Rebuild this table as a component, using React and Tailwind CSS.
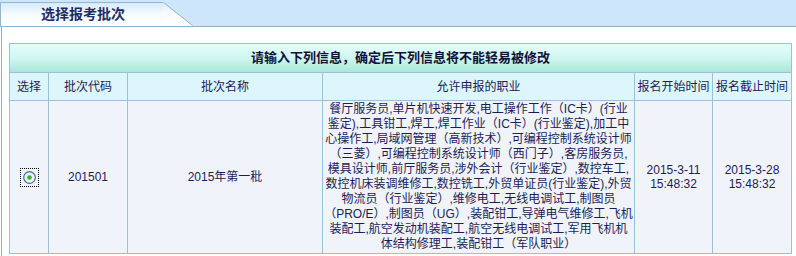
import React from "react";

const jobLines = [
  "餐厅服务员,单片机快速开发,电工操作工作（IC卡）(行业",
  "鉴定),工具钳工,焊工,焊工作业（IC卡）(行业鉴定),加工中",
  "心操作工,局域网管理（高新技术）,可编程控制系统设计师",
  "（三菱）,可编程控制系统设计师（西门子）,客房服务员,",
  "模具设计师,前厅服务员,涉外会计（行业鉴定）,数控车工,",
  "数控机床装调维修工,数控铣工,外贸单证员(行业鉴定),外贸",
  "物流员（行业鉴定）,维修电工,无线电调试工,制图员",
  "（PRO/E）,制图员（UG）,装配钳工,导弹电气维修工,飞机",
  "装配工,航空发动机装配工,航空无线电调试工,军用飞机机",
  "体结构修理工,装配钳工（军队职业）",
];

const headers = ["选择", "批次代码", "批次名称", "允许申报的职业", "报名开始时间", "报名截止时间"];

function Radio() {
  return (
    <span className="flex h-[19px] w-[19px] items-center justify-center border border-dotted border-black">
      <svg width="13" height="13" viewBox="0 0 13 13">
        <defs>
          <linearGradient id="rg" x1="0" y1="0" x2="1" y2="1">
            <stop offset="0" stopColor="#dfe7ef" />
            <stop offset="1" stopColor="#ffffff" />
          </linearGradient>
        </defs>
        <circle cx="6.5" cy="6.5" r="5.8" fill="url(#rg)" stroke="#3f6e9f" strokeWidth="1.2" />
        <circle cx="6.5" cy="6.5" r="2.3" fill="#2fb52f" />
      </svg>
    </span>
  );
}

export default function App() {
  return (
    <div className="h-[256px] w-[796px] overflow-hidden bg-white font-['Liberation_Sans','Noto_Sans_CJK_SC',sans-serif] text-[12px] text-[#1c1d58]">
      {/* top tab bar */}
      <div className="flex h-[27px] border-b border-[#8cb3cb] bg-[#cde6fb]">
        <div className="mt-[2px] flex h-[24px] w-[163px] items-center border-t border-l border-[#93b8d0] bg-gradient-to-b from-[#d6eafb] via-[#f7fbfe] to-white pl-[40px] text-[14px] font-bold text-[#1f2c6a]">
          选择报考批次
        </div>
        <svg width="30" height="24" className="mt-[2px]">
          <defs>
            <linearGradient id="tg" x1="0" y1="0" x2="0" y2="1">
              <stop offset="0" stopColor="#d6eafb" />
              <stop offset="0.45" stopColor="#f7fbfe" />
              <stop offset="1" stopColor="#ffffff" />
            </linearGradient>
          </defs>
          <polygon points="0,0 1,0 30,24 0,24" fill="url(#tg)" />
          <line x1="0.5" y1="0.5" x2="29.5" y2="23.5" stroke="#93b0c4" strokeWidth="1" />
        </svg>
      </div>

      {/* panel */}
      <div className="ml-px h-[229px] border-l border-[#8cb3cb] pt-[16px] pl-[7px]">
        <div className="grid w-[783px] grid-cols-[38px_78px_194px_311px_77px_78px] gap-px bg-[#9cc0dc] p-px">
          <div className="col-span-6 flex h-[28px] items-center justify-center bg-gradient-to-b from-[#e4fdfd] via-[#d0f6f0] to-[#a9e8d6] text-[13px] font-bold text-[#10123a]">
            请输入下列信息，确定后下列信息将不能轻易被修改
          </div>

          {headers.map((h) => (
            <div key={h} className="flex h-[27px] items-center justify-center bg-[#ddf6fc] whitespace-nowrap">
              {h}
            </div>
          ))}

          <div className="flex h-[152px] items-center justify-center bg-[#f0f4fa]">
            <Radio />
          </div>
          <div className="flex items-center justify-center bg-[#f0f4fa]">201501</div>
          <div className="flex items-center justify-center bg-[#f0f4fa]">2015年第一秕</div>
          <div className="flex flex-col items-center justify-center bg-[#f0f4fa] leading-[15px]">
            {jobLines.map((line, i) => (
              <div key={i} className="whitespace-nowrap">
                {line}
              </div>
            ))}
          </div>
          <div className="flex flex-col items-center justify-center bg-[#f0f4fa] leading-[14px]">
            <div>2015-3-11</div>
            <div>15:48:32</div>
          </div>
          <div className="flex flex-col items-center justify-center bg-[#f0f4fa] leading-[14px]">
            <div>2015-3-28</div>
            <div>15:48:32</div>
          </div>
        </div>
      </div>
    </div>
  );
}
